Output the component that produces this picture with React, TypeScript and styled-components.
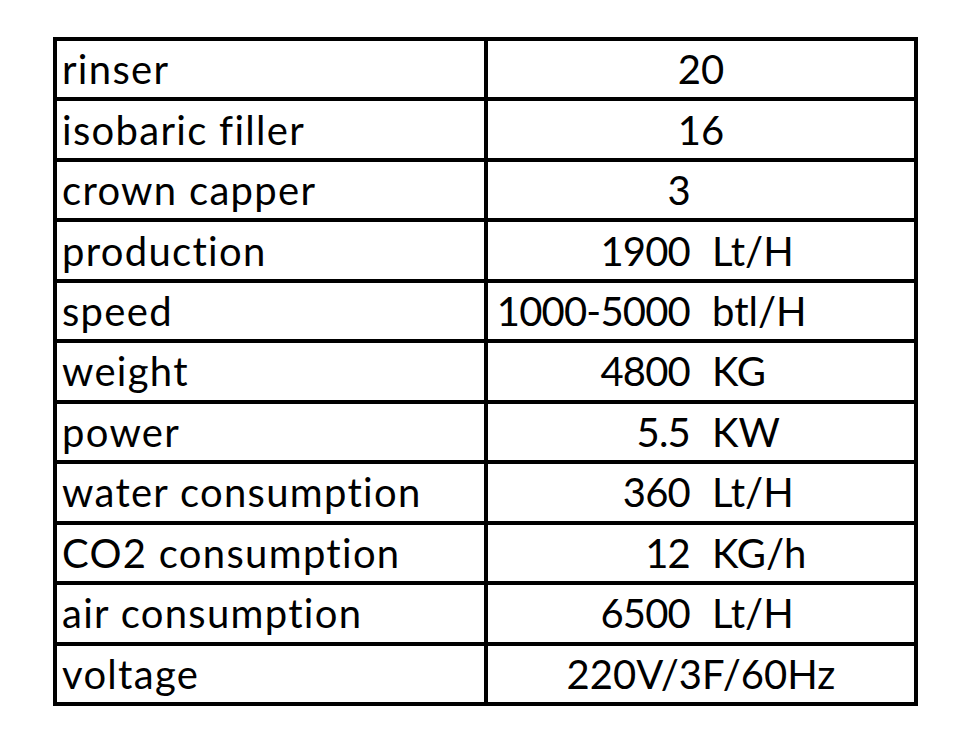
import React from "react";
import styled, { createGlobalStyle } from "styled-components";

const Global = createGlobalStyle`
  html, body { margin: 0; padding: 0; background: #ffffff; }
  body { font-family: Lato, "Liberation Sans", sans-serif; color: #000; }
`;

const Page = styled.div`
  width: 962px;
  height: 735px;
  box-sizing: border-box;
  padding: 37px 0 0 53px;
`;

const Table = styled.div`
  display: grid;
  width: 865px;
  height: 669px;
  box-sizing: border-box;
  grid-template-columns: 427px 1fr;
  grid-template-rows: repeat(11, 1fr);
  gap: 4px;
  padding: 4px;
  background: #000;
`;

const Cell = styled.div`
  background: #fff;
  display: flex;
  align-items: center;
  font-size: 40px;
  line-height: 48px;
  white-space: nowrap;
  font-variant-ligatures: none;
  font-feature-settings: "liga" 0, "clig" 0;
`;

const Label = styled(Cell)`
  padding-left: 5px;
  letter-spacing: 1.3px;
`;

const Value = styled(Cell)<{ $centered?: boolean }>`
  display: grid;
  grid-template-columns: 202px 1fr;
  column-gap: 22px;
  align-items: center;
  ${(p) => (p.$centered ? "grid-template-columns: 1fr; justify-items: center;" : "")}
`;

const Num = styled.span`
  text-align: right;
  letter-spacing: -0.8px;
`;

const Unit = styled.span`
  text-align: left;
`;

type Row = { label: string; num?: string; unit?: string; text?: string };

const rows: Row[] = [
  { label: "rinser", text: "20" },
  { label: "isobaric filler", text: "16" },
  { label: "crown capper", num: "3", unit: "" },
  { label: "production", num: "1900", unit: "Lt/H" },
  { label: "speed", num: "1000-5000", unit: "btl/H" },
  { label: "weight", num: "4800", unit: "KG" },
  { label: "power", num: "5.5", unit: "KW" },
  { label: "water consumption", num: "360", unit: "Lt/H" },
  { label: "CO2 consumption", num: "12", unit: "KG/h" },
  { label: "air consumption", num: "6500", unit: "Lt/H" },
  { label: "voltage", text: "220V/3F/60Hz" },
];

export default function App() {
  return (
    <Page>
      <Global />
      <Table>
        {rows.map((r) => (
          <React.Fragment key={r.label}>
            <Label>{r.label}</Label>
            {r.text !== undefined ? (
              <Value $centered>
                <span>{r.text}</span>
              </Value>
            ) : (
              <Value>
                <Num>{r.num}</Num>
                <Unit>{r.unit}</Unit>
              </Value>
            )}
          </React.Fragment>
        ))}
      </Table>
    </Page>
  );
}
